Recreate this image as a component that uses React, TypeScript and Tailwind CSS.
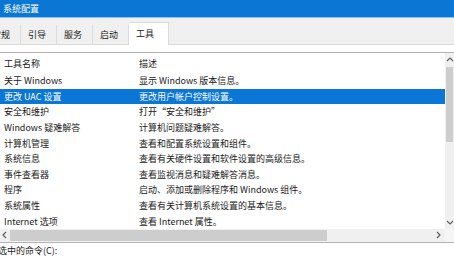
import React from 'react';

const tools = [
  ['关于 Windows', '显示 Windows 版本信息。'],
  ['更改 UAC 设置', '更改用户帐户控制设置。'],
  ['安全和维护', '打开“安全和维护”'],
  ['Windows 疑难解答', '计算机问题疑难解答。'],
  ['计算机管理', '查看和配置系统设置和组件。'],
  ['系统信息', '查看有关硬件设置和软件设置的高级信息。'],
  ['事件查看器', '查看监视消息和疑难解答消息。'],
  ['程序', '启动、添加或删除程序和 Windows 组件。'],
  ['系统属性', '查看有关计算机系统设置的基本信息。'],
  ['Internet 选项', '查看 Internet 属性。'],
];

const tabs = ['常规', '引导', '服务', '启动'];

function Chevron({ dir }: { dir: 'up' | 'down' | 'left' | 'right' }) {
  const pts = {
    up: '1,5 4,2 7,5',
    down: '1,2 4,5 7,2',
    left: '5,1 2,4 5,7',
    right: '2,1 5,4 2,7',
  }[dir];
  return (
    <svg width="8" height="8" viewBox="0 0 8 8" className="block">
      <polyline points={pts} fill="none" stroke="#606060" strokeWidth="1.2" />
    </svg>
  );
}

export default function App() {
  return (
    <div className="w-[454px] h-[256px] overflow-hidden bg-white text-[9px] leading-none text-[#1a1a1a] font-['Noto_Sans_CJK_SC','Noto_Sans',sans-serif]">
      <div className="h-[18px] bg-[#0b77d4] border-b border-[#8ec3ee] flex items-center pl-[3px] text-white">
        系统配置
      </div>

      <div className="h-[27px] bg-[#f0f0f0] border-b border-[#d9d9d9] flex items-end">
        <div className="flex items-end ml-[-15px]">
          {tabs.map((t) => (
            <div key={t} className="w-[36px] h-[19px] pl-[7px] flex items-center border-r border-[#dcdcdc]">
              {t}
            </div>
          ))}
          <div className="w-[40px] h-[23px] pl-[7px] flex items-center bg-white border-t border-r border-[#d9d9d9] mb-[-1px] pb-[2px]">
            工具
          </div>
        </div>
      </div>

      <div className="mt-[7px] border-t border-b border-[#b4b4b4] flex">
        <div className="w-[445px] flex flex-col">
          <div className="h-[20px] flex items-center">
            <div className="w-[139px] pl-[4px]">工具名称</div>
            <div>描述</div>
          </div>
          {tools.map(([name, desc], i) => (
            <div
              key={name}
              className={
                i === 1
                  ? 'h-[15.6px] flex items-center bg-[#0a76d5] text-white'
                  : 'h-[15.6px] flex items-center'
              }
            >
              <div className="w-[139px] pl-[4px] whitespace-nowrap">{name}</div>
              <div className="whitespace-nowrap">{desc}</div>
            </div>
          ))}
          <div className="h-[13px] flex items-center bg-[#f0f0f0]">
            <div className="w-[10px] flex justify-center">
              <Chevron dir="left" />
            </div>
            <div className="w-[317px] h-[11px] bg-[#cdcdcd]" />
            <div className="flex-1" />
            <div className="w-[13px] flex justify-center">
              <Chevron dir="right" />
            </div>
          </div>
        </div>

        <div className="flex-1 flex flex-col">
          <div className="h-[176px] flex flex-col bg-[#f0f0f0]">
            <div className="h-[14px] flex items-center justify-center">
              <Chevron dir="up" />
            </div>
            <div className="h-[75px] mx-[1px] bg-[#cdcdcd]" />
            <div className="flex-1" />
            <div className="h-[13px] flex items-center justify-center">
              <Chevron dir="down" />
            </div>
          </div>
          <div className="flex-1 bg-[#f5f5f5]" />
        </div>
      </div>

      <div className="mt-[3px] ml-[-2px] whitespace-nowrap">选中的命令(C):</div>
    </div>
  );
}
